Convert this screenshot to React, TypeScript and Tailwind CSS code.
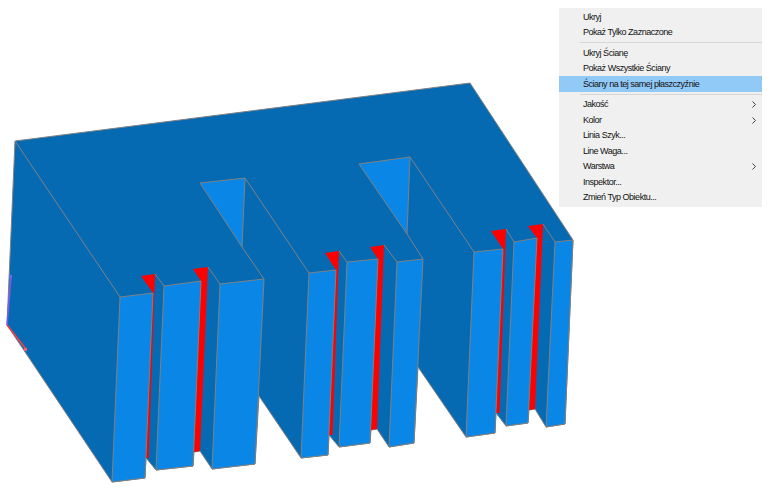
const body =
  "15,141 470,83 573,240 565,424 546,427 535,409 529,410 528,423 506,426 496,413 495,433 466,437 418,367 414,443 389,447 377,429 371,430 370,443 339,447 329,435 328,455 301,458 259,396 255,464 212,469 200,451 194,452 193,466 156,470 146,458 145,478 112,482 7,325";

const faces = [
  "120,297 153,293 145,478 112,482",
  "164,286 201,281 193,466 156,470",
  "220,284 264,279 255,464 212,469",
  "309,273 336,270 328,455 301,458",
  "347,262 378,259 370,443 339,447",
  "397,262 423,259 414,443 389,447",
  "474,252 503,249 495,433 466,437",
  "514,242 537,238 528,423 506,426",
  "555,242 573,240 565,424 546,427",
  "200,183 245,178 242,247",
  "359,164 410,157 407,234",
];

const reds = [
  "141,276 155,274 148.5,458 145,458 153,293",
  "193,269 208,267 200,451 194,452 201,281",
  "325,253 339,251 332.5,435 329,435 336,270",
  "370,247 384,245 377,429 371,430 378,259",
  "491,231 506,229 499.5,413 496,413 503,249",
  "528,226 543,224 535,409 529,410 537,238",
];

const edges = [
  "15,141 120,297",
  "245,178 309,273",
  "242,247 264,279",
  "410,157 474,252",
  "407,234 423,259",
  "155,274 164,286",
  "208,267 220,284",
  "339,251 347,262",
  "384,245 397,262",
  "506,229 514,242",
  "543,224 555,242",
];

const groups = [
  [{ label: "Ukryj" }, { label: "Pokaż Tylko Zaznaczone" }],
  [
    { label: "Ukryj Ścianę" },
    { label: "Pokaż Wszystkie Ściany" },
    { label: "Ściany na tej samej płaszczyźnie", active: true },
  ],
  [
    { label: "Jakość", more: true },
    { label: "Kolor", more: true },
    { label: "Linia Szyk..." },
    { label: "Line Waga..." },
    { label: "Warstwa", more: true },
    { label: "Inspektor..." },
    { label: "Zmień Typ Obiektu..." },
  ],
];

function Model() {
  return (
    <svg width="767" height="502" viewBox="0 0 767 502" className="block">
      <polygon points={body} fill="#066ab3" stroke="#808080" strokeWidth="1" />
      {reds.map((p) => (
        <polygon key={p} points={p} fill="#ff0000" />
      ))}
      {faces.map((p) => (
        <polygon key={p} points={p} fill="#0a87e6" stroke="#808080" strokeWidth="1" />
      ))}
      {edges.map((p) => (
        <polyline key={p} points={p} fill="none" stroke="#808080" strokeWidth="1" />
      ))}
      <line x1="11" y1="276" x2="7" y2="325" stroke="#7a5cf0" strokeWidth="1.6" />
      <line x1="7" y1="325" x2="26" y2="349" stroke="#f04050" strokeWidth="1.6" />
      <rect x="9" y="275" width="3" height="3" fill="#6a6af0" />
      <rect x="24" y="348" width="3" height="3" fill="#f06070" />
    </svg>
  );
}

export default function App() {
  return (
    <div className="relative h-[502px] w-[767px] overflow-hidden bg-white">
      <Model />
      <div className="absolute left-[559px] top-[8px] w-[203px] bg-[#f0f0f0] py-[1px] pb-[2px] font-['Liberation_Sans',sans-serif] text-[9px] tracking-[-0.48px] text-[#111111]">
        {groups.map((group, i) => (
          <div key={i}>
            {i > 0 && (
              <div className="flex h-[5px] items-center pl-[21px]">
                <div className="h-[1px] w-full bg-[#d7d7d7]" />
              </div>
            )}
            {group.map((item) => (
              <div
                key={item.label}
                className={`flex h-[15.5px] items-center justify-between pl-[24px] pr-[6px] pt-[1px] ${
                  item.active ? "bg-[#91c9f7]" : ""
                }`}
              >
                <span className="whitespace-nowrap">{item.label}</span>
                {item.more && (
                  <svg width="4" height="7" viewBox="0 0 4 7" fill="none" stroke="#404040" strokeWidth="1">
                    <path d="M0.5 0.5 L3.5 3.5 L0.5 6.5" />
                  </svg>
                )}
              </div>
            ))}
          </div>
        ))}
      </div>
    </div>
  );
}
